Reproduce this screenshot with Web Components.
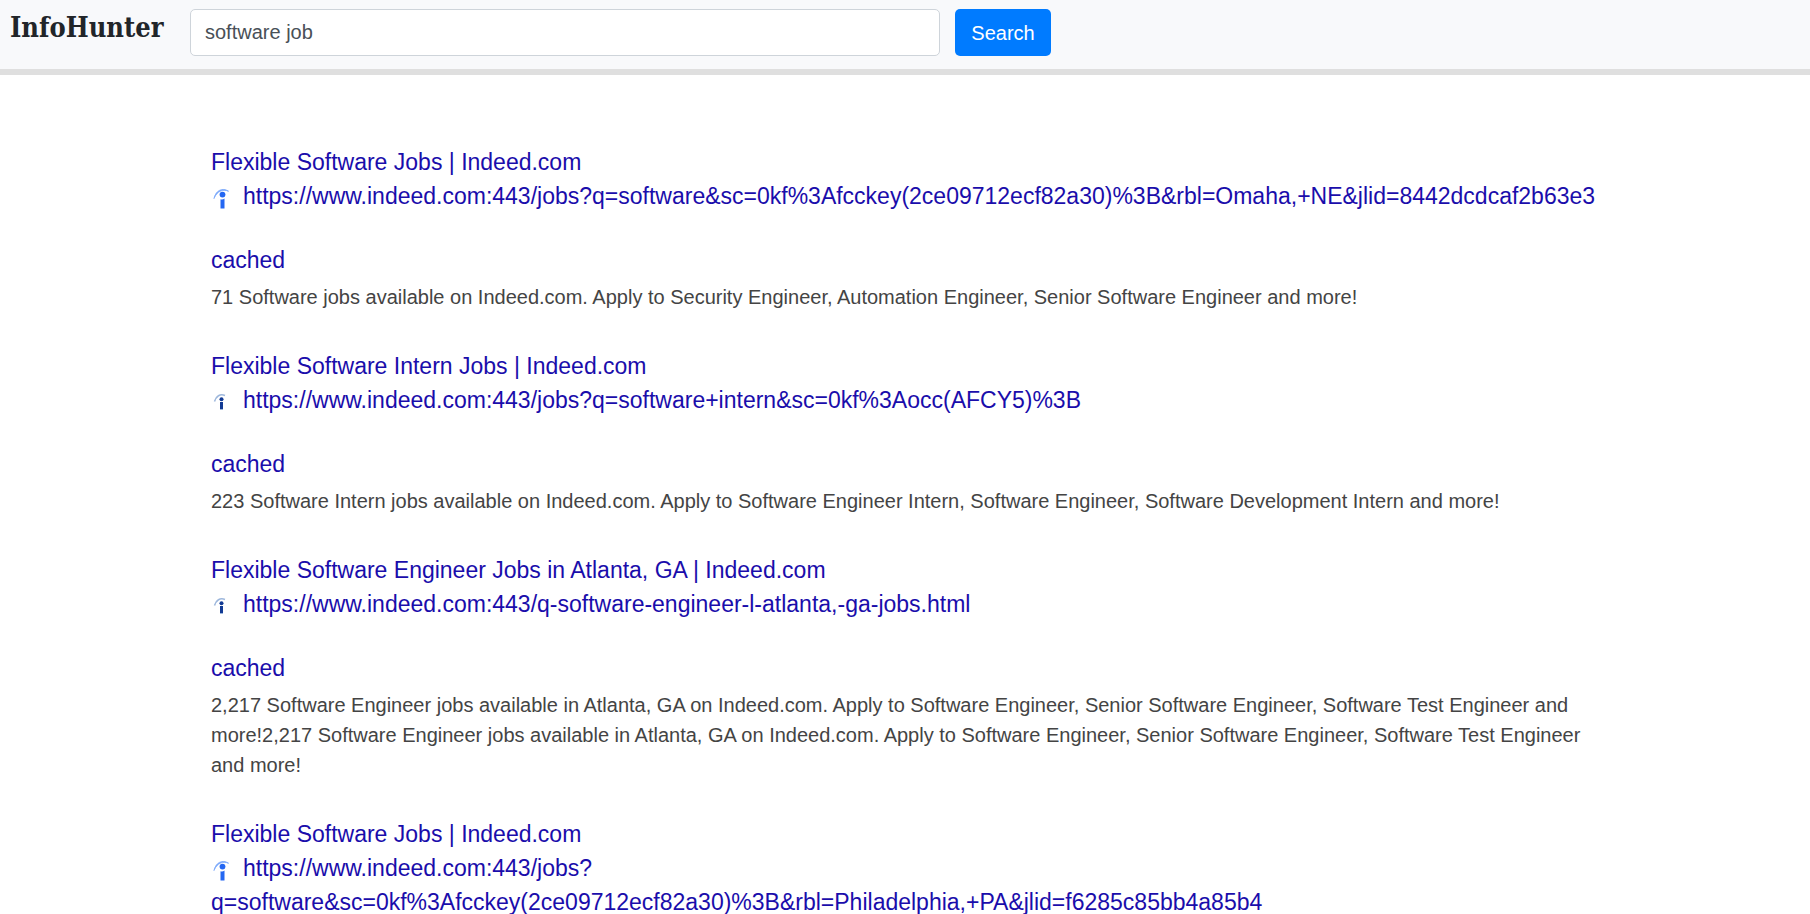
<!DOCTYPE html>
<html lang="en">
<head>
<meta charset="utf-8">
<meta name="viewport" content="width=device-width, initial-scale=1">
<title>InfoHunter</title>
<style>
  body { margin: 0; background: #fff; color: #212529; font: 20px/30px "Liberation Sans", Arial, sans-serif; }
  main { box-sizing: border-box; max-width: 1426px; margin: 0 auto; padding: 70px 19px 0; }
</style>
</head>
<body>
<search-header query="software job">InfoHunter</search-header>
<main>
  <search-result icon="large" cached="#cached-1" href="https://www.indeed.com:443/jobs?q=software&amp;sc=0kf%3Afcckey(2ce09712ecf82a30)%3B&amp;rbl=Omaha,+NE&amp;jlid=8442dcdcaf2b63e3">
    <span slot="title">Flexible Software Jobs | Indeed.com</span>71 Software jobs available on Indeed.com. Apply to Security Engineer, Automation Engineer, Senior Software Engineer and more!</search-result>
  <search-result icon="small" cached="#cached-2" href="https://www.indeed.com:443/jobs?q=software+intern&amp;sc=0kf%3Aocc(AFCY5)%3B">
    <span slot="title">Flexible Software Intern Jobs | Indeed.com</span>223 Software Intern jobs available on Indeed.com. Apply to Software Engineer Intern, Software Engineer, Software Development Intern and more!</search-result>
  <search-result icon="small" cached="#cached-3" href="https://www.indeed.com:443/q-software-engineer-l-atlanta,-ga-jobs.html">
    <span slot="title">Flexible Software Engineer Jobs in Atlanta, GA | Indeed.com</span>2,217 Software Engineer jobs available in Atlanta, GA on Indeed.com. Apply to Software Engineer, Senior Software Engineer, Software Test Engineer and more!2,217 Software Engineer jobs available in Atlanta, GA on Indeed.com. Apply to Software Engineer, Senior Software Engineer, Software Test Engineer and more!</search-result>
  <search-result icon="large" href="https://www.indeed.com:443/jobs?q=software&amp;sc=0kf%3Afcckey(2ce09712ecf82a30)%3B&amp;rbl=Philadelphia,+PA&amp;jlid=f6285c85bb4a85b4">
    <span slot="title">Flexible Software Jobs | Indeed.com</span></search-result>
</main>

<template id="header-template">
  <style>
    :host { display: block; background: #f8f9fb; border-bottom: 6px solid #dfdfdf; }
    header { display: flex; align-items: flex-start; padding: 9px 10px 13px; }
    h1 { flex: 0 0 180px; margin: 0; font: bold 27px/38px "Roboto Slab", "DejaVu Serif Condensed", "DejaVu Serif", serif; }
    form { flex: 1; min-width: 0; display: flex; gap: 15px; }
    input { box-sizing: border-box; flex: 0 1 750px; min-width: 0; height: 47px; padding: 0 14px; border: 1px solid #ced4da; border-radius: 5px; background: #fff; color: #495057; font: inherit; }
    button { flex: 0 0 96px; height: 47px; padding: 0; border: 0; border-radius: 5px; background: #007bff; color: #fff; font: inherit; cursor: pointer; }
  </style>
  <header>
    <h1><slot></slot></h1>
    <form role="search">
      <input type="text" name="q" aria-label="Search query">
      <button type="submit">Search</button>
    </form>
  </header>
</template>

<template id="result-template">
  <style>
    :host { display: block; margin-bottom: 37px; }
    :host(:last-child) { margin-bottom: 0; }
    a { color: #1a0dab; text-decoration: none; }
    a:hover { text-decoration: underline; }
    .links { font-size: 23px; line-height: 34px; }
    .title, .cached { display: block; }
    .cached { margin-top: 30px; }
    result-icon { margin-right: 8px; }
    p { margin: 5px 0 0; color: #444; }
    :host(:not([cached])) .cached, :host(:not([cached])) p { display: none; }
  </style>
  <div class="links">
    <a class="title"><slot name="title"></slot></a>
    <div><result-icon></result-icon><a class="url"></a></div>
    <a class="cached">cached</a>
  </div>
  <p><slot></slot></p>
</template>

<template id="icon-template">
  <style>
    :host { display: inline-block; width: 24px; height: 24px; line-height: 0; vertical-align: middle; }
    svg { display: block; width: 24px; height: 24px; }
    .small { display: none; }
    :host([kind="small"]) .small { display: block; }
    :host([kind="small"]) .large { display: none; }
  </style>
  <svg class="large" viewBox="0 0 24 24" aria-hidden="true">
    <path d="M3 12.5C4.5 5 11 1 17.5 5.2C12 2.8 6 5 3 12.5Z" fill="#5b93fa" stroke="#86b0fb" stroke-width="1"/>
    <circle cx="11.5" cy="8.6" r="2.9" fill="#2467f2"/>
    <path d="M9.5 13.2Q11.5 14 13.5 12.6V22.6H9.5Z" fill="#2467f2"/>
  </svg>
  <svg class="small" viewBox="0 0 24 24" aria-hidden="true">
    <path d="M3.5 11.5C5 6 9 3.6 14 5.4" fill="none" stroke="#9db7dc" stroke-width="1.6"/>
    <circle cx="10.5" cy="9.2" r="2" fill="#123a94"/>
    <rect x="9" y="12" width="3" height="7" fill="#123a94"/>
    <rect x="9" y="19" width="3" height="1" fill="#9db7dc"/>
  </svg>
</template>

<script>
  class TemplateElement extends HTMLElement {
    constructor() {
      super();
      const source = document.getElementById(this.constructor.templateId);
      this.attachShadow({ mode: "open" }).append(source.content.cloneNode(true));
    }
  }

  class ResultIcon extends TemplateElement {
    static templateId = "icon-template";
  }

  class SearchHeader extends TemplateElement {
    static templateId = "header-template";
    connectedCallback() {
      this.shadowRoot.querySelector("input").value = this.getAttribute("query") || "";
      this.shadowRoot.querySelector("form").addEventListener("submit", event => event.preventDefault());
    }
  }

  class SearchResult extends TemplateElement {
    static templateId = "result-template";
    connectedCallback() {
      const root = this.shadowRoot;
      const href = this.getAttribute("href");
      root.querySelector(".title").href = href;
      root.querySelector(".url").href = href;
      root.querySelector(".url").textContent = href;
      root.querySelector(".cached").href = this.getAttribute("cached") || "#";
      root.querySelector("result-icon").setAttribute("kind", this.getAttribute("icon"));
    }
  }

  customElements.define("result-icon", ResultIcon);
  customElements.define("search-header", SearchHeader);
  customElements.define("search-result", SearchResult);
</script>
</body>
</html>
